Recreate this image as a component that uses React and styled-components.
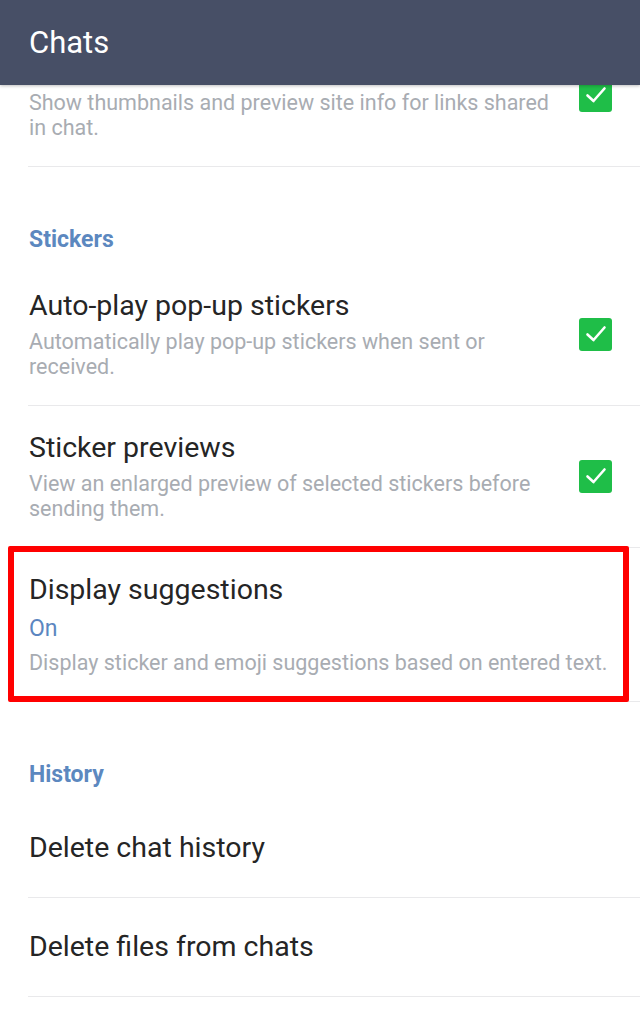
import { createGlobalStyle } from 'styled-components';
import styled from 'styled-components';

const GlobalStyle = createGlobalStyle`
    html, body {
        margin: 0;
        padding: 0;
        background: #fff;
    }
    body {
        font-family: Roboto, "Noto Sans", sans-serif;
        -webkit-font-smoothing: antialiased;
    }
`;

const sections = [
    {
        items: [
            {
                title: 'Link previews',
                desc: 'Show thumbnails and preview site info for links shared in chat.',
                checked: true,
            },
        ],
    },
    {
        heading: 'Stickers',
        items: [
            {
                title: 'Auto-play pop-up stickers',
                desc: 'Automatically play pop-up stickers when sent or received.',
                checked: true,
            },
            {
                title: 'Sticker previews',
                desc: 'View an enlarged preview of selected stickers before sending them.',
                checked: true,
            },
            {
                title: 'Display suggestions',
                value: 'On',
                desc: 'Display sticker and emoji suggestions based on entered text.',
                highlighted: true,
            },
        ],
    },
    {
        heading: 'History',
        items: [
            { title: 'Delete chat history' },
            { title: 'Delete files from chats' },
        ],
    },
];

const CheckBox = () => (
    <StyledCheck>
        <svg width="22" height="18" viewBox="0 0 22 18" fill="none">
            <path d="M2.5 9.5 L8.5 15 L19.5 2.5" stroke="#fff" strokeWidth="2.6" strokeLinecap="round" strokeLinejoin="round" />
        </svg>
    </StyledCheck>
);

const App = () => {
    return (
        <StyledApp>
            <GlobalStyle />
            <StyledHeader>
                <h1>Chats</h1>
            </StyledHeader>
            <StyledScroller>
                <StyledList>
                    {sections.map((section, i) => (
                        <div key={i}>
                            {section.heading ? (<StyledCategory>{section.heading}</StyledCategory>) : ""}
                            {section.items.map((item) => (
                                <StyledRow key={item.title} $simple={!item.desc} $highlighted={item.highlighted}>
                                    <StyledText>
                                        <StyledTitle>{item.title}</StyledTitle>
                                        {item.value ? (<StyledValue>{item.value}</StyledValue>) : ""}
                                        {item.desc ? (<StyledDesc>{item.desc}</StyledDesc>) : ""}
                                    </StyledText>
                                    {item.checked ? (<CheckBox />) : ""}
                                </StyledRow>
                            ))}
                        </div>
                    ))}
                </StyledList>
            </StyledScroller>
        </StyledApp>
    );
};
export default App;

const StyledApp = styled.div`
    width: 640px;
    height: 1009px;
    display: flex;
    flex-direction: column;
    overflow: hidden;
    background: #fff;
`;

const StyledHeader = styled.header`
    flex: 0 0 85px;
    display: flex;
    align-items: center;
    padding: 0 29px;
    background-color: #474f66;
    box-shadow: 0 1px 3px rgba(0, 0, 0, .25);
    position: relative;
    z-index: 2;
    h1 {
        margin: 0;
        font-size: 31px;
        font-weight: 400;
        color: #fff;
        line-height: 1;
        margin-top: -1px;
    }
`;

const StyledScroller = styled.div`
    flex: 1;
    overflow: hidden;
`;

/* list is scrolled a little: the first row sits under the header */
const StyledList = styled.div`
    margin-top: -60px;
`;

const StyledCategory = styled.div`
    padding: 59px 29px 10px;
    font-size: 23px;
    line-height: 28px;
    font-weight: 700;
    color: #5c88bf;
`;

const StyledRow = styled.div`
    position: relative;
    display: flex;
    align-items: center;
    gap: 24px;
    min-height: ${props => props.$simple ? '98px' : 'auto'};
    padding: ${props => props.$simple ? '0' : '25px 0 26px'};
    margin-left: 28px;
    padding-right: 28px;
    border-bottom: 1px solid #e9e9eb;

    ${props => props.$highlighted && `
        &::after {
            content: "";
            position: absolute;
            left: -20px;
            right: 11px;
            top: -2px;
            bottom: -1px;
            border: 6px solid #ff0000;
            border-radius: 2px;
            pointer-events: none;
        }
    `}
`;

const StyledText = styled.div`
    flex: 1;
    min-width: 0;
    padding-left: 1px;
`;

const StyledTitle = styled.div`
    font-size: 28.5px;
    line-height: 34px;
    color: #252525;
`;

const StyledValue = styled.div`
    margin-top: 7px;
    font-size: 23px;
    line-height: 30px;
    color: #5b86c0;
`;

const StyledDesc = styled.div`
    margin-top: 6px;
    font-size: 21.5px;
    line-height: 25px;
    color: #a8acb2;
`;

const StyledCheck = styled.div`
    flex: 0 0 33px;
    width: 33px;
    height: 33px;
    border-radius: 3px;
    background: #1fbe48;
    display: flex;
    align-items: center;
    justify-content: center;
`;
